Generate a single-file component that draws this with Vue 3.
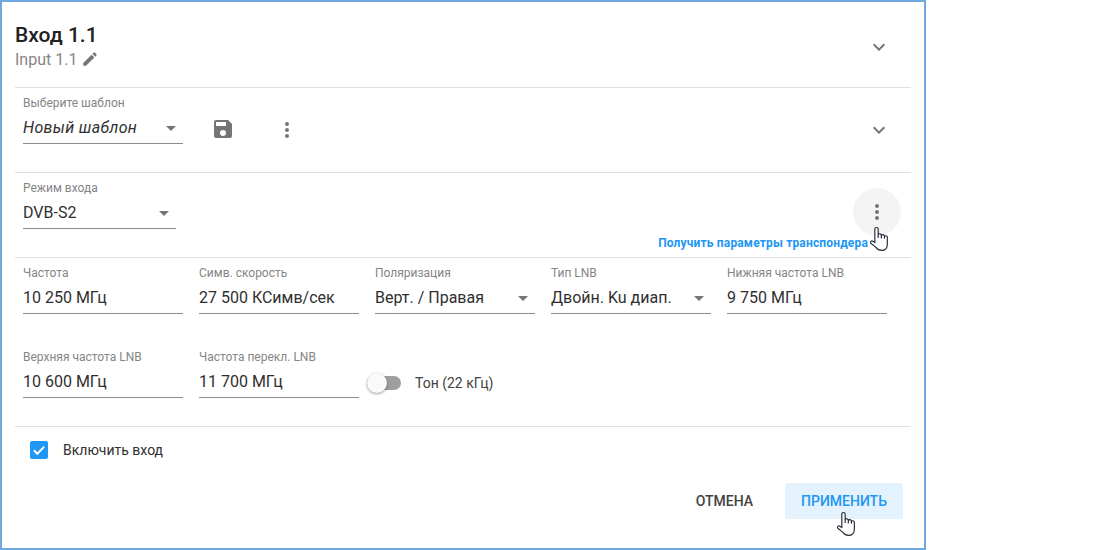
<script setup>
const rowFields = [
  { label: 'Частота', value: '10 250 МГц' },
  { label: 'Симв. скорость', value: '27 500 КСимв/сек' },
  { label: 'Поляризация', value: 'Верт. / Правая', select: true },
  { label: 'Тип LNB', value: 'Двойн. Ku диап.', select: true },
  { label: 'Нижняя частота LNB', value: '9 750 МГц' },
  { label: 'Верхняя частота LNB', value: '10 600 МГц' },
  { label: 'Частота перекл. LNB', value: '11 700 МГц' }
]
const handPath = 'M5.5 16V3a1.6 1.6 0 0 1 3.2 0v8V9a1.5 1.5 0 0 1 3 0v2.5V9.8a1.5 1.5 0 0 1 3 0v2V10.8a1.4 1.4 0 0 1 2.8 0v6.7c0 3.8-2.4 6-5.6 6-3 0-4.2-1.2-5.6-3.2L1.6 16.6c-1-1.4.7-3 2-2z'
</script>

<template>
  <div class="frame">
    <header class="head">
      <div>
        <div class="title">Вход 1.1</div>
        <div class="sub">
          <span>Input 1.1</span>
          <svg class="pencil" viewBox="0 0 24 24" width="18" height="18"><path fill="#757575" d="M3 17.25V21h3.75L17.81 9.94l-3.75-3.75L3 17.25zM20.71 7.04a1 1 0 0 0 0-1.41l-2.34-2.34a1 1 0 0 0-1.41 0l-1.83 1.83 3.75 3.75 1.83-1.83z"/></svg>
        </div>
      </div>
      <svg class="chev" viewBox="0 0 24 24" width="24" height="24"><path fill="#757575" d="M7.41 8.59 12 13.17l4.59-4.58L18 10l-6 6-6-6z"/></svg>
    </header>

    <section class="tpl">
      <div class="field">
        <label class="lbl">Выберите шаблон</label>
        <div class="val italic">Новый шаблон<i class="arrow"></i></div>
      </div>
      <svg class="save" viewBox="0 0 24 24" width="24" height="24"><path fill="#757575" d="M17 3H5a2 2 0 0 0-2 2v14a2 2 0 0 0 2 2h14a2 2 0 0 0 2-2V7l-4-4zm-5 16a3 3 0 1 1 0-6 3 3 0 0 1 0 6zm3-10H5V5h10v4z"/></svg>
      <svg class="dots" viewBox="0 0 24 24" width="24" height="24"><path fill="#757575" d="M12 8a2 2 0 1 0 0-4 2 2 0 0 0 0 4zm0 2a2 2 0 1 0 0 4 2 2 0 0 0 0-4zm0 6a2 2 0 1 0 0 4 2 2 0 0 0 0-4z"/></svg>
      <svg class="chev tpl-chev" viewBox="0 0 24 24" width="24" height="24"><path fill="#757575" d="M7.41 8.59 12 13.17l4.59-4.58L18 10l-6 6-6-6z"/></svg>
    </section>

    <section class="mode">
      <div class="field mode-field">
        <label class="lbl">Режим входа</label>
        <div class="val">DVB-S2<i class="arrow"></i></div>
      </div>
      <div class="transponder">
        <div class="round">
          <svg viewBox="0 0 24 24" width="24" height="24"><path fill="#757575" d="M12 8a2 2 0 1 0 0-4 2 2 0 0 0 0 4zm0 2a2 2 0 1 0 0 4 2 2 0 0 0 0-4zm0 6a2 2 0 1 0 0 4 2 2 0 0 0 0-4z"/></svg>
        </div>
        <div class="hint">Получить параметры транспондера</div>
        <svg class="hand hand-top" viewBox="0 0 19 25" width="20" height="26"><path :d="handPath" fill="#fff" stroke="#1f2733" stroke-width="1.1" stroke-linejoin="round"/></svg>
      </div>
    </section>

    <section class="params">
      <div v-for="f in rowFields" :key="f.label" class="field">
        <label class="lbl">{{ f.label }}</label>
        <div class="val">{{ f.value }}<i v-if="f.select" class="arrow"></i></div>
      </div>
      <div class="tone">
        <span class="switch"><i class="knob"></i></span>
        <span class="tone-text">Тон (22 кГц)</span>
      </div>
    </section>

    <section class="enable">
      <span class="check">
        <svg viewBox="0 0 18 18" width="18" height="18"><path d="M3.8 9.2 7.4 12.8 14.2 5.6" fill="none" stroke="#fff" stroke-width="2"/></svg>
      </span>
      <span class="enable-text">Включить вход</span>
    </section>

    <footer class="actions">
      <button class="btn">ОТМЕНА</button>
      <button class="btn primary">
        ПРИМЕНИТЬ
        <svg class="hand hand-btn" viewBox="0 0 19 25" width="20" height="26"><path :d="handPath" fill="#fff" stroke="#1f2733" stroke-width="1.1" stroke-linejoin="round"/></svg>
      </button>
    </footer>
  </div>
</template>

<style scoped>
.frame {
  width: 926px;
  height: 550px;
  box-sizing: border-box;
  border: 2px solid #6fa8dc;
  padding: 0 13px;
  background: #fff;
  font-family: Roboto, "Liberation Sans", sans-serif;
  color: #212121;
  overflow: hidden;
}
.head {
  height: 86px;
  box-sizing: border-box;
  border-bottom: 1px solid #e0e0e0;
  display: flex;
  justify-content: space-between;
  align-items: flex-start;
  padding-top: 20px;
}
.title {
  font-size: 21px;
  font-weight: 500;
  line-height: 26px;
  color: #212121;
}
.sub {
  display: flex;
  align-items: center;
  gap: 4px;
  height: 22px;
  font-size: 16px;
  color: #858585;
}
.chev { margin: 13px 20px 0 0; }
.tpl {
  height: 85px;
  box-sizing: border-box;
  border-bottom: 1px solid #e0e0e0;
  padding: 8px 0 0 8px;
  display: flex;
  align-items: flex-start;
}
.field {
  width: 160px;
  flex: none;
}
.lbl {
  display: block;
  font-size: 12px;
  line-height: 14px;
  color: #858585;
}
.val {
  position: relative;
  box-sizing: border-box;
  height: 29px;
  margin-top: 5px;
  padding-top: 1px;
  border-bottom: 1px solid #8c8c8c;
  font-size: 16px;
  line-height: 24px;
  color: #303030;
  white-space: nowrap;
}
.italic {
  font-style: italic;
  letter-spacing: 0.33px;
}
.arrow {
  position: absolute;
  right: 7px;
  top: 11px;
  border: 5px solid transparent;
  border-top-color: #757575;
  border-bottom: 0;
}
.save { margin: 21px 0 0 28px; }
.dots { margin: 22px 0 0 40px; }
.tpl-chev { margin: 22px 20px 0 auto; }
.mode {
  height: 85px;
  box-sizing: border-box;
  border-bottom: 1px solid #e0e0e0;
  padding: 8px 10px 0 8px;
  display: flex;
  justify-content: space-between;
}
.mode-field { width: 153px; }
.transponder {
  position: relative;
  display: flex;
  flex-direction: column;
  align-items: flex-end;
  margin-top: 7px;
}
.round {
  width: 48px;
  height: 48px;
  border-radius: 50%;
  background: #f4f4f4;
  display: flex;
  align-items: center;
  justify-content: center;
}
.hint {
  font-size: 12px;
  font-weight: 700;
  line-height: 14px;
  letter-spacing: 0.16px;
  color: #2196f3;
  margin: 0 33px 0 0;
  white-space: nowrap;
}
.hand { position: absolute; }
.hand-top { right: 12px; top: 38px; }
.params {
  height: 169px;
  box-sizing: border-box;
  border-bottom: 1px solid #e0e0e0;
  padding: 8px 0 0 8px;
  display: flex;
  flex-wrap: wrap;
  align-content: flex-start;
  column-gap: 16px;
  row-gap: 36px;
}
.tone {
  display: flex;
  align-items: center;
  height: 48px;
  margin-left: -8px;
  margin-top: 1px;
}
.switch {
  position: relative;
  display: block;
  width: 34px;
  height: 14px;
  margin-top: 16px;
  border-radius: 7px;
  background: #9e9e9e;
}
.knob {
  position: absolute;
  left: 0;
  top: -3px;
  width: 20px;
  height: 20px;
  border-radius: 50%;
  background: #fafafa;
  box-shadow: 0 1px 3px rgba(0, 0, 0, 0.4);
}
.tone-text {
  margin: 15px 0 0 14px;
  font-size: 14px;
  color: #424242;
}
.enable {
  height: 46px;
  display: flex;
  align-items: center;
  padding-left: 15px;
}
.check {
  width: 18px;
  height: 18px;
  border-radius: 2px;
  background: #2196f3;
  display: block;
}
.check svg { display: block; }
.enable-text {
  margin-left: 15px;
  font-size: 14px;
  color: #303030;
}
.actions {
  display: flex;
  justify-content: flex-end;
  align-items: center;
  gap: 16px;
  padding: 10px 8px 0 0;
}
.btn {
  position: relative;
  height: 36px;
  padding: 0 16px;
  border: 0;
  border-radius: 2px;
  background: transparent;
  font: 500 14px Roboto, "Liberation Sans", sans-serif;
  color: #424242;
}
.primary {
  background: #e3f2fd;
  color: #2196f3;
}
.hand-btn { left: 51px; top: 28px; }
</style>
